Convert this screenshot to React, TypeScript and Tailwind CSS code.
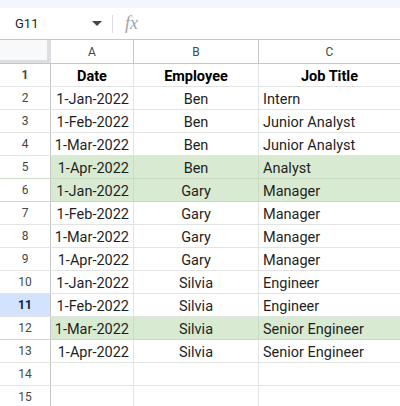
const rows: [string, string, string, boolean][] = [
  ["1-Jan-2022", "Ben", "Intern", false],
  ["1-Feb-2022", "Ben", "Junior Analyst", false],
  ["1-Mar-2022", "Ben", "Junior Analyst", false],
  ["1-Apr-2022", "Ben", "Analyst", true],
  ["1-Jan-2022", "Gary", "Manager", true],
  ["1-Feb-2022", "Gary", "Manager", false],
  ["1-Mar-2022", "Gary", "Manager", false],
  ["1-Apr-2022", "Gary", "Manager", false],
  ["1-Jan-2022", "Silvia", "Engineer", false],
  ["1-Feb-2022", "Silvia", "Engineer", false],
  ["1-Mar-2022", "Silvia", "Senior Engineer", true],
  ["1-Apr-2022", "Silvia", "Senior Engineer", false],
];

function RowNum({ n }: { n: number }) {
  const active = n === 11;
  return (
    <div
      className={
        active
          ? "w-[51px] shrink-0 flex items-center justify-center pt-[1px] border-r border-[#c4c7c5] bg-[#d3e3fd] text-[12px] leading-[15px] font-bold text-[#041e49]"
          : "w-[51px] shrink-0 flex items-center justify-center pt-[1px] border-r border-[#c4c7c5] text-[12px] leading-[15px] text-[#444746]"
      }
    >
      {n}
    </div>
  );
}

export default function App() {
  return (
    <div
      className="w-[400px] h-[406px] overflow-hidden bg-white text-black"
      style={{ fontFamily: "Roboto, 'Liberation Sans', sans-serif" }}
    >
      <div className="h-[8px] bg-[#f3f6fc]" />
      {/* name box + formula bar */}
      <div className="h-[31px] flex items-center">
        <div className="w-[112px] flex items-center justify-between pl-[15px] pr-[10px]">
          <span className="text-[13px] text-[#1f1f1f]">G11</span>
          <svg width="10" height="6" viewBox="0 0 10 6">
            <path d="M0 0h10L5 5z" fill="#444746" />
          </svg>
        </div>
        <div className="w-px h-[18px] bg-[#dadce0]" />
        <span
          className="ml-[12px] text-[18px] italic text-[#a0a4a8]"
          style={{ fontFamily: "'Liberation Serif', serif" }}
        >
          fx
        </span>
      </div>
      {/* column headers */}
      <div className="h-[25px] flex border-t border-b border-[#c4c7c5] text-[12px] text-[#444746]">
        <div className="w-[51px] shrink-0 bg-[#f8f9fa] border-r-4 border-b-[3px] border-[#dcdee2]" />
        <div className="w-[83px] shrink-0 flex items-center justify-center pt-[1px] border-r border-[#c4c7c5]">A</div>
        <div className="w-[125px] shrink-0 flex items-center justify-center pt-[1px] border-r border-[#c4c7c5]">B</div>
        <div className="flex-1 flex items-center justify-center pt-[1px]">C</div>
      </div>
      {/* header row */}
      <div className="h-[23px] flex border-b border-[#e2e3e3] text-[14.5px] leading-[17px] font-bold">
        <RowNum n={1} />
        <div className="w-[83px] shrink-0 flex items-center justify-center pt-[3px] border-r border-[#e2e3e3]">Date</div>
        <div className="w-[125px] shrink-0 flex items-center justify-center pt-[3px] border-r border-[#e2e3e3]">Employee</div>
        <div className="flex-1 flex items-center justify-center pt-[3px]">Job Title</div>
      </div>
      {rows.map(([date, emp, title, green], i) => (
        <div
          key={i}
          className={
            green
              ? "h-[23px] flex border-b border-[#c9dcc2] text-[14.5px] leading-[17px] text-[#1f1f1f]"
              : "h-[23px] flex border-b border-[#e2e3e3] text-[14.5px] leading-[17px] text-[#1f1f1f]"
          }
        >
          <RowNum n={i + 2} />
          <div
            className={
              green
                ? "w-[83px] shrink-0 flex items-center justify-end pr-[4px] pt-[3px] bg-[#d9ead3] border-r border-[#c9dcc2]"
                : "w-[83px] shrink-0 flex items-center justify-end pr-[4px] pt-[3px] border-r border-[#e2e3e3]"
            }
          >
            {date}
          </div>
          <div
            className={
              green
                ? "w-[125px] shrink-0 flex items-center justify-center pt-[3px] bg-[#d9ead3] border-r border-[#c9dcc2]"
                : "w-[125px] shrink-0 flex items-center justify-center pt-[3px] border-r border-[#e2e3e3]"
            }
          >
            {emp}
          </div>
          <div
            className={
              green
                ? "flex-1 flex items-center pl-[4px] pt-[3px] bg-[#d9ead3]"
                : "flex-1 flex items-center pl-[4px] pt-[3px]"
            }
          >
            {title}
          </div>
        </div>
      ))}
      {[14, 15].map((n) => (
        <div key={n} className="h-[23px] flex border-b border-[#e2e3e3]">
          <RowNum n={n} />
          <div className="w-[83px] shrink-0 border-r border-[#e2e3e3]" />
          <div className="w-[125px] shrink-0 border-r border-[#e2e3e3]" />
          <div className="flex-1" />
        </div>
      ))}
    </div>
  );
}
